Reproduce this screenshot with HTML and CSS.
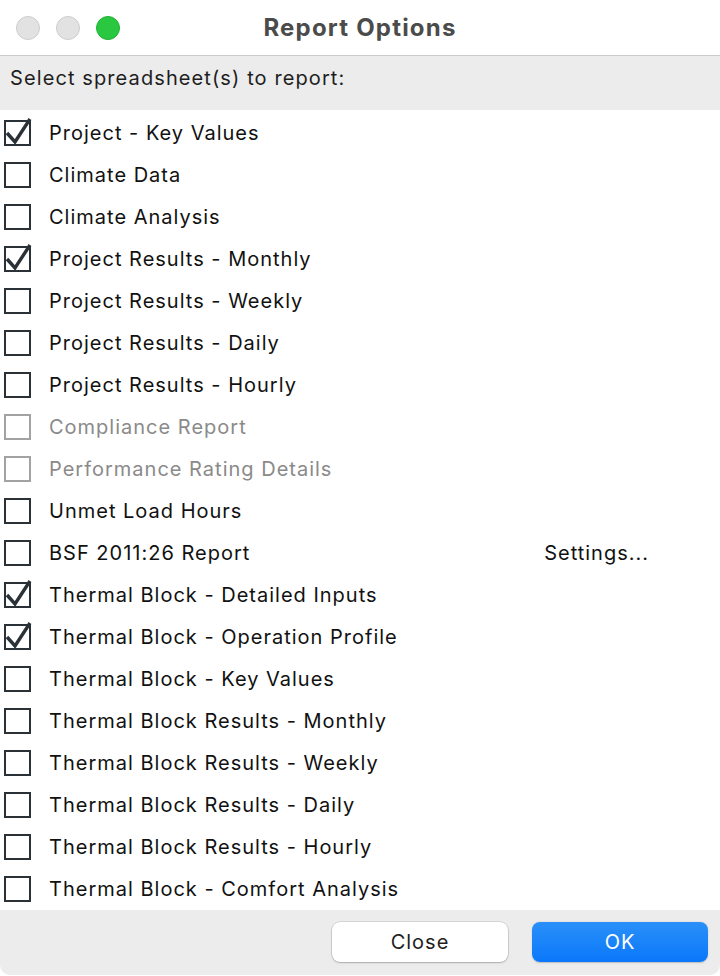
FILE: index.html
```html
<!DOCTYPE html>
<html>
<head>
<meta charset="utf-8">
<link rel="stylesheet" href="styles.css">
</head>
<body>
<div class="window">
  <div class="titlebar">
    <div class="lights">
      <span class="light gray"></span>
      <span class="light gray"></span>
      <span class="light green"></span>
    </div>
    <div class="title">Report Options</div>
  </div>
  <div class="prompt">Select spreadsheet(s) to report:</div>
  <div class="list">
    <div class="row checked"><span class="box"><svg viewBox="0 0 28 32" class="tick"><path d="M2 17 L10 26 L25 3"/></svg></span><span class="label">Project - Key Values</span></div>
    <div class="row"><span class="box"></span><span class="label">Climate Data</span></div>
    <div class="row"><span class="box"></span><span class="label">Climate Analysis</span></div>
    <div class="row checked"><span class="box"><svg viewBox="0 0 28 32" class="tick"><path d="M2 17 L10 26 L25 3"/></svg></span><span class="label">Project Results - Monthly</span></div>
    <div class="row"><span class="box"></span><span class="label">Project Results - Weekly</span></div>
    <div class="row"><span class="box"></span><span class="label">Project Results - Daily</span></div>
    <div class="row"><span class="box"></span><span class="label">Project Results - Hourly</span></div>
    <div class="row disabled"><span class="box"></span><span class="label">Compliance Report</span></div>
    <div class="row disabled"><span class="box"></span><span class="label">Performance Rating Details</span></div>
    <div class="row"><span class="box"></span><span class="label">Unmet Load Hours</span></div>
    <div class="row"><span class="box"></span><span class="label">BSF 2011:26 Report</span><span class="settings">Settings...</span></div>
    <div class="row checked"><span class="box"><svg viewBox="0 0 28 32" class="tick"><path d="M2 17 L10 26 L25 3"/></svg></span><span class="label">Thermal Block - Detailed Inputs</span></div>
    <div class="row checked"><span class="box"><svg viewBox="0 0 28 32" class="tick"><path d="M2 17 L10 26 L25 3"/></svg></span><span class="label">Thermal Block - Operation Profile</span></div>
    <div class="row"><span class="box"></span><span class="label">Thermal Block - Key Values</span></div>
    <div class="row"><span class="box"></span><span class="label">Thermal Block Results - Monthly</span></div>
    <div class="row"><span class="box"></span><span class="label">Thermal Block Results - Weekly</span></div>
    <div class="row"><span class="box"></span><span class="label">Thermal Block Results - Daily</span></div>
    <div class="row"><span class="box"></span><span class="label">Thermal Block Results - Hourly</span></div>
    <div class="row"><span class="box"></span><span class="label">Thermal Block - Comfort Analysis</span></div>
  </div>
  <div class="footer">
    <button class="btn close">Close</button>
    <button class="btn ok">OK</button>
  </div>
</div>
</body>
</html>
```
FILE: styles.css
```css
html, body {
  margin: 0;
  padding: 0;
  background: #ffffff;
}
body {
  font-family: Inter, "Liberation Sans", sans-serif;
  color: #1d1d1f;
}
.window {
  width: 720px;
  height: 975px;
  background: #ececec;
  border-radius: 0 0 10px 10px;
  display: flex;
  flex-direction: column;
  overflow: hidden;
}
.titlebar {
  height: 56px;
  background: #ffffff;
  border-bottom: 1px solid #cbcbcb;
  display: flex;
  align-items: center;
  position: relative;
  box-sizing: border-box;
}
.lights {
  display: flex;
  gap: 16px;
  padding-left: 16px;
}
.light {
  width: 24px;
  height: 24px;
  border-radius: 50%;
  box-sizing: border-box;
}
.light.gray {
  background: #e2e2e2;
  border: 1px solid #cdcdcd;
}
.light.green {
  background: #2ac840;
  border: 1px solid #22b038;
}
.title {
  position: absolute;
  left: 0;
  right: 0;
  top: 0;
  bottom: 0;
  display: flex;
  align-items: center;
  justify-content: center;
  font-weight: 700;
  font-size: 24px;
  letter-spacing: 1.2px;
  color: #4b4b4b;
}
.prompt {
  height: 54px;
  box-sizing: border-box;
  padding: 10px 0 0 10px;
  font-size: 20px;
  letter-spacing: 1.1px;
  color: #1e1e1e;
  background: #ececec;
}
.list {
  background: #ffffff;
  padding-top: 2px;
  display: flex;
  flex-direction: column;
}
.row {
  height: 42px;
  display: flex;
  align-items: center;
  font-size: 20px;
  letter-spacing: 1px;
  color: #111111;
}
.box {
  width: 27px;
  height: 26px;
  box-sizing: border-box;
  border: 2px solid #2a3238;
  margin-left: 4px;
  margin-right: 18px;
  position: relative;
  flex: none;
}
.tick {
  position: absolute;
  left: -1px;
  top: -6px;
  width: 28px;
  height: 32px;
  overflow: visible;
}
.tick path {
  fill: none;
  stroke: #2a3238;
  stroke-width: 3.4;
  stroke-linecap: butt;
  stroke-linejoin: miter;
}
.row.disabled {
  color: #8a8a8a;
}
.row.disabled .box {
  border-color: #a2a2a2;
}
.settings {
  margin-left: auto;
  margin-right: 71px;
}
.footer {
  flex: 1;
  display: flex;
  justify-content: flex-end;
  align-items: flex-start;
  gap: 24px;
  padding: 12px 12px 0 0;
}
.btn {
  width: 176px;
  height: 40px;
  border-radius: 8px;
  font-family: Inter, "Liberation Sans", sans-serif;
  font-size: 20px;
  letter-spacing: 1px;
  border: none;
  padding: 0;
}
.btn.close {
  background: #ffffff;
  color: #1e1e1e;
  box-shadow: 0 0 0 0.5px rgba(0,0,0,0.18), 0 1px 2px rgba(0,0,0,0.2);
}
.btn.ok {
  background: linear-gradient(#2a8ff8, #0a78fa);
  color: #ffffff;
  box-shadow: 0 0.5px 1.5px rgba(0,0,0,0.2);
}
```
